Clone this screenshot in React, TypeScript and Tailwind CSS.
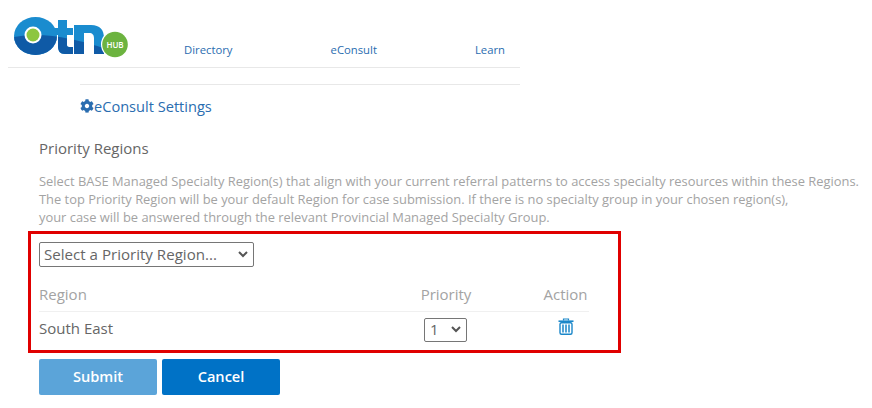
import { type FC } from 'react';
import { FaCog } from 'react-icons/fa';

const OtnLogo: FC = () => (
    <svg width="116" height="46" viewBox="14 14 116 46" className="block">
        <defs>
            <clipPath id="otnWave">
                <path d="M10 38C30 33 50 35 70 39S95 46 112 50V62H10z" />
            </clipPath>
        </defs>
        {/* letters, light on top */}
        <g fill="#1a8ccf">
            <ellipse cx="35.500" cy="36" rx="21.500" ry="19" />
            <path d="M58 20h9v8h6v7h-6v10c0 1 .5 2 2 2h4v7h-8c-5 0-7-3-7-8V35h-5v-7h5z" />
            <path d="M74 25h17c9 0 13 5 13 13v16H94V38c0-3-1.500-5-5-5h-5v21H74z" />
        </g>
        {/* same letters, darker under the wave */}
        <g fill="#0f5aa6" clipPath="url(#otnWave)">
            <ellipse cx="35.500" cy="36" rx="21.500" ry="19" />
            <path d="M58 20h9v8h6v7h-6v10c0 1 .5 2 2 2h4v7h-8c-5 0-7-3-7-8V35h-5v-7h5z" />
            <path d="M74 25h17c9 0 13 5 13 13v16H94V38c0-3-1.500-5-5-5h-5v21H74z" />
        </g>
        <circle cx="33" cy="35" r="8.500" fill="#ffffff" />
        <circle cx="33" cy="35" r="6.500" fill="#8dc63f" />
        {/* hub badge */}
        <circle cx="115" cy="44.500" r="14" fill="#ffffff" />
        <circle cx="115" cy="44.500" r="12.800" fill="#6cb33f" />
        <text x="115" y="48" textAnchor="middle" fontSize="8" fontWeight="600" fill="#ffffff" fontFamily="'Open Sans', sans-serif">HUB</text>
    </svg>
);

const TrashIcon: FC = () => (
    <svg width="16" height="17" viewBox="0 0 16 17" className="block" fill="none" stroke="#1b87c9">
        <path d="M5.500 2.500V1h5v1.500" strokeWidth="1.200" />
        <path d="M.5 3.200h15" strokeWidth="1.600" />
        <rect x="2" y="4.800" width="12" height="11.500" rx="1.500" strokeWidth="1.400" />
        <path d="M5 6.500v8M8 6.500v8M11 6.500v8" strokeWidth="1.500" />
    </svg>
);

const Chevron: FC = () => (
    <svg width="10" height="7" viewBox="0 0 10 7" className="block" fill="none" stroke="#555555" strokeWidth="2">
        <path d="M1 1l4 4 4-4" />
    </svg>
);

const App: FC = () => {
    const navItems = ['Directory', 'eConsult', 'Learn'];

    return (
        <div className="w-[872px] h-[408px] overflow-hidden bg-white text-[#666666] font-['Open_Sans',sans-serif]">
            <header className="ml-2 w-[512px] h-[68px] border-b border-[#e8e8e8] flex items-start">
                <div className="ml-[6px] mt-[14px]">
                    <OtnLogo />
                </div>
                <nav className="flex flex-1 justify-between mt-[42px] ml-[54px] pr-[15px] text-[11.3px] leading-[16px] text-[#2a6db0]">
                    {navItems.map((item) => (
                        <a key={item} href="#" className="block">{item}</a>
                    ))}
                </nav>
            </header>

            <div className="ml-20 w-[440px] mt-4 border-t border-[#e8e8e8]" />

            <h2 className="ml-20 mt-[10px] flex items-center text-[14.6px] leading-[22px] text-[#2a6db0]">
                <FaCog size={14} color="#2a6db0" className="shrink-0" />
                eConsult Settings
            </h2>

            <h3 className="ml-[39px] mt-[21px] text-[15px] leading-[20px] text-[#666666]">Priority Regions</h3>

            <p className="ml-[39px] mt-[14px] w-[830px] text-[12.9px] leading-[18px] text-[#a3a3a3]">
                Select BASE Managed Specialty Region(s) that align with your current referral patterns to access specialty resources within these Regions.
                <br />
                The top Priority Region will be your default Region for case submission. If there is no specialty group in your chosen region(s),
                <br />
                your case will be answered through the relevant Provincial Managed Specialty Group.
            </p>

            <section className="ml-7 mt-[5px] w-[593px] h-[122px] border-[3px] border-[#e00000] pl-2 pr-[29px] pt-[8px]">
                <div className="w-[215px] h-[25px] border border-[#767676] rounded-[2px] flex items-center justify-between pl-1 pr-[5px] text-[15.100px] leading-none text-[#666666]">
                    <span>Select a Priority Region...</span>
                    <Chevron />
                </div>

                <div className="mt-[14px] h-[31px] pb-[4px] flex items-center border-b border-[#f0f0f0] text-[15px] text-[#a3a3a3]">
                    <span className="flex-1">Region</span>
                    <span className="w-[52px] text-center mr-[3px]">Priority</span>
                    <span className="w-[45px] ml-[68px] text-center mr-[1px]">Action</span>
                </div>

                <div className="h-[35px] flex items-center text-[15px] text-[#666666]">
                    <span className="flex-1 pb-[2px]">South East</span>
                    <div className="w-[43px] h-[24px] mr-[3px] border border-[#767676] rounded-[2px] flex items-center justify-between pl-[5px] pr-[5px]">
                        <span className="leading-none">1</span>
                        <Chevron />
                    </div>
                    <div className="w-[45px] ml-[73px] flex justify-center pb-[6px] mr-[1px]">
                        <TrashIcon />
                    </div>
                </div>
            </section>

            <div className="ml-[39px] mt-[6px] flex gap-[5px]">
                <button className="w-[118px] h-9 rounded-[2px] bg-[#5ba4d9] text-[14.6px] font-semibold text-white">Submit</button>
                <button className="w-[118px] h-9 rounded-[2px] bg-[#0072c6] text-[14.6px] font-semibold text-white">Cancel</button>
            </div>
        </div>
    );
};

export default App;
